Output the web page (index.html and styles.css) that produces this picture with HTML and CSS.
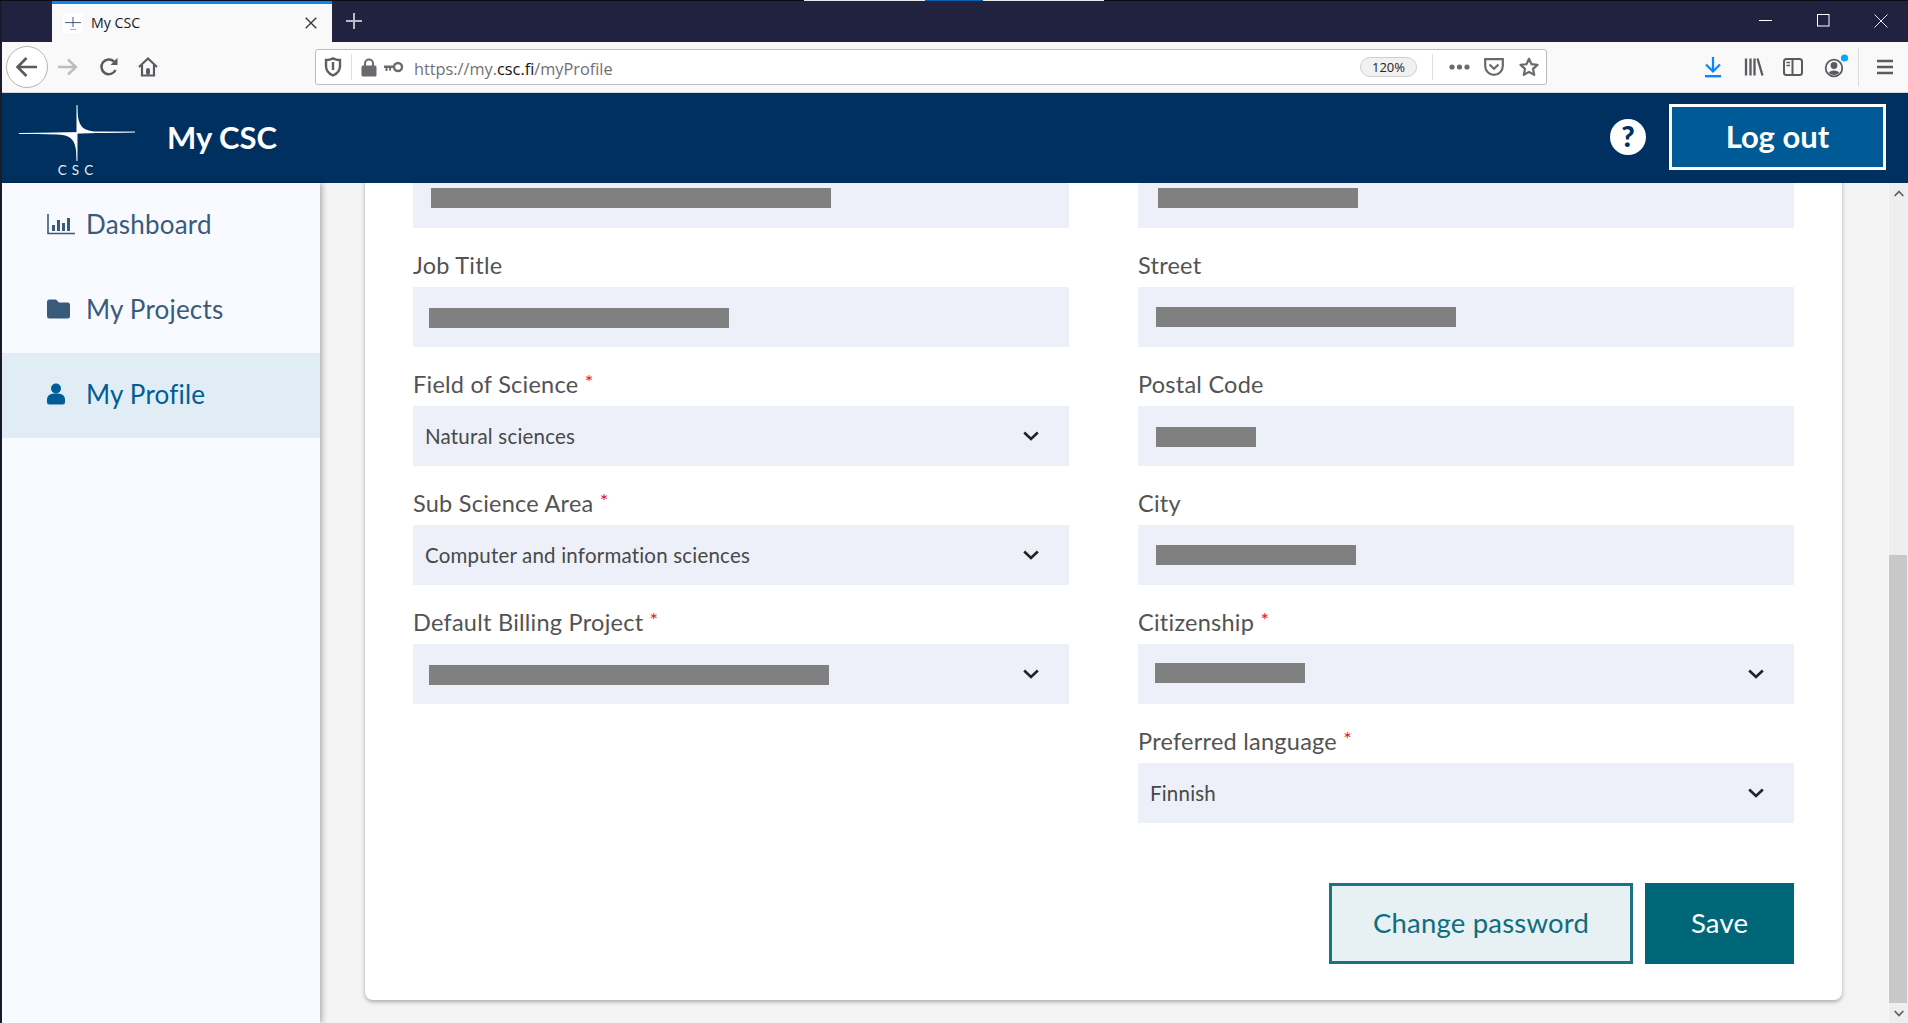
FILE: index.html
```html
<!DOCTYPE html>
<html lang="en">
<head>
<meta charset="utf-8">
<title>My CSC</title>
<link rel="stylesheet" href="styles.css">
</head>
<body>
<div class="window">
  <div class="topline"><span class="tl-white"></span><span class="tl-blue"></span><span class="tl-white"></span></div>
  <div class="tabstrip">
    <div class="tab">
      <span class="favicon"><svg width="20" height="20" viewBox="0 0 20 20"><path d="M2 9.6 H18 M10 4 V14" stroke="#16305c" stroke-width="0.8"/><rect x="7" y="16" width="6" height="1" fill="#a4aec0"/></svg></span>
      <span class="tab-title">My CSC</span>
      <svg class="tab-close" width="12" height="12" viewBox="0 0 12 12"><path d="M0.7 0.7 L11.3 11.3 M11.3 0.7 L0.7 11.3" stroke="#333" stroke-width="1.3"/></svg>
    </div>
    <svg class="tab-plus" width="18" height="18" viewBox="0 0 18 18"><path d="M9 1 V17 M1 9 H17" stroke="#b9bac4" stroke-width="2"/></svg>
    <div class="winbtns">
      <svg width="13" height="13" viewBox="0 0 13 13"><path d="M0 6.5 H13" stroke="#fff" stroke-width="1"/></svg>
      <svg class="win-max" width="13" height="13" viewBox="0 0 13 13"><rect x="0.5" y="0.5" width="11.5" height="11.5" fill="none" stroke="#fff"/></svg>
      <svg class="win-close" width="14" height="14" viewBox="0 0 14 14"><path d="M0.5 0.5 L13.5 13.5 M13.5 0.5 L0.5 13.5" stroke="#e6e6ea" stroke-width="1"/></svg>
    </div>
  </div>
  <div class="navbar">
    <span class="back"><svg width="24" height="22" viewBox="0 0 24 22"><path d="M22 11 H3 M11.5 2 L2.5 11 L11.5 20" fill="none" stroke="#5b5b5f" stroke-width="2.6"/></svg></span>
    <svg class="forward" width="20" height="18" viewBox="0 0 20 18"><path d="M0 9 H18 M10 1.5 L18 9 L10 16.5" fill="none" stroke="#bdbdbf" stroke-width="2.4"/></svg>
    <svg class="reload" width="20" height="20" viewBox="0 0 20 20"><path d="M16.5 13 A7.4 7.4 0 1 1 15 4.5" fill="none" stroke="#5b5b5f" stroke-width="2.5"/><path d="M18.5 0.8 V8 H11.5 Z" fill="#5b5b5f"/></svg>
    <svg class="home" width="20" height="20" viewBox="0 0 20 20"><path d="M1 10 L10 1.5 L19 10 M4 8 V18.5 H16 V8" fill="none" stroke="#5b5b5f" stroke-width="2.2"/><rect x="8" y="11" width="4" height="7" rx="2" fill="#5b5b5f"/></svg>
    <div class="urlbar">
      <svg class="u-shield" width="18" height="20" viewBox="0 0 18 20"><path d="M2 3 C5.5 3 7 2 9 1.5 C11 2 12.5 3 16 3 V9 C16 14 12.5 17 9 18.5 C5.5 17 2 14 2 9 Z" fill="none" stroke="#5f5f63" stroke-width="2.4"/><path d="M9 5 V13" stroke="#5f5f63" stroke-width="2.4"/></svg>
      <span class="u-sep u-sep-a"></span>
      <svg class="u-lock" width="16" height="19" viewBox="0 0 16 19"><path d="M4 8 V5.5 A4 4 0 0 1 12 5.5 V8" fill="none" stroke="#6a6a6e" stroke-width="2"/><rect x="0.5" y="7.5" width="15" height="11" rx="1.5" fill="#6a6a6e"/></svg>
      <svg class="u-key" width="20" height="12" viewBox="0 0 20 12"><circle cx="14" cy="6" r="4" fill="none" stroke="#6a6a6e" stroke-width="2.4"/><path d="M0 4.5 H10 V7 H0 Z M1.5 7 H3.5 V10 H1.5 Z M5 7 H7 V9.5 H5 Z" fill="#6a6a6e"/></svg>
      <span class="u-text">https://my.<b class="u-host">csc.fi</b>/myProfile</span>
      <span class="u-zoom">120%</span>
      <span class="u-sep u-sep-b"></span>
      <svg class="u-dots" width="21" height="6" viewBox="0 0 21 6"><circle cx="3" cy="3" r="2.6" fill="#6a6a6e"/><circle cx="10.5" cy="3" r="2.6" fill="#6a6a6e"/><circle cx="18" cy="3" r="2.6" fill="#6a6a6e"/></svg>
      <svg class="u-pocket" width="20" height="18" viewBox="0 0 20 18"><path d="M1.2 1.2 H18.8 V8 A8.8 8.8 0 0 1 1.2 8 Z" fill="none" stroke="#6a6a6e" stroke-width="2.2"/><path d="M5.5 6.5 L10 10.8 L14.5 6.5" fill="none" stroke="#6a6a6e" stroke-width="2.2"/></svg>
      <svg class="u-star" width="20" height="20" viewBox="0 0 20 20"><path d="M10 1.8 L12.5 7.2 L18.5 7.9 L14 11.9 L15.2 17.9 L10 14.9 L4.8 17.9 L6 11.9 L1.5 7.9 L7.5 7.2 Z" fill="none" stroke="#6a6a6e" stroke-width="2.2" stroke-linejoin="round"/></svg>
    </div>
    <svg class="t-down" width="20" height="22" viewBox="0 0 20 22"><path d="M10 1 V15 M3 8.5 L10 15.5 L17 8.5" fill="none" stroke="#0a84ff" stroke-width="2.2"/><rect x="2" y="19" width="16" height="2.4" fill="#0a84ff"/></svg>
    <svg class="t-lib" width="20" height="18" viewBox="0 0 20 18"><path d="M2 0.5 V17.5 M6.5 0.5 V17.5 M10.5 0.5 V17.5 M13.5 0.5 L18.5 17.5" fill="none" stroke="#5b5b5f" stroke-width="2.3"/></svg>
    <svg class="t-side" width="20" height="18" viewBox="0 0 20 18"><rect x="1" y="1" width="18" height="16" rx="2.5" fill="none" stroke="#5b5b5f" stroke-width="2"/><path d="M9.5 1 V17" stroke="#5b5b5f" stroke-width="2"/><path d="M3.5 4.5 H7 M3.5 7.5 H7" stroke="#5b5b5f" stroke-width="1.5"/></svg>
    <svg class="t-acct" width="26" height="24" viewBox="0 0 26 24"><circle cx="10" cy="14" r="8.3" fill="none" stroke="#5b5b5f" stroke-width="1.8"/><circle cx="10" cy="11.5" r="3.4" fill="#5b5b5f"/><path d="M4.8 19 C5.5 15.5 14.5 15.5 15.2 19 A8 8 0 0 1 4.8 19 Z" fill="#5b5b5f"/><circle cx="20.5" cy="4" r="3.6" fill="#0aa5ff"/></svg>
    <span class="t-sep"></span>
    <svg class="t-menu" width="16" height="16" viewBox="0 0 16 16"><path d="M0 2 H16 M0 8 H16 M0 14 H16" stroke="#5b5b5f" stroke-width="2.3"/></svg>
  </div>
  <header class="appbar">
    <svg class="logo" width="120" height="75" viewBox="0 0 120 75"><path d="M60 3 C60.8 22 63 29 80 29.6 L118 30 L60 31.5 Z" fill="#fff"/><path d="M60 59 C59.2 40 57 33 40 32.4 L2 31.5 L60 30.5 Z" fill="#fff"/><path d="M60 3 V59 M2 31.5 L118 30" stroke="#fff" stroke-width="1"/><text class="logo-text" x="61" y="73" text-anchor="middle">CSC</text></svg>
    <span class="app-title">My CSC</span>
    <svg class="help" width="36" height="36" viewBox="0 0 36 36"><circle cx="18" cy="18" r="18" fill="#fff"/><text class="help-q" x="18" y="28" text-anchor="middle">?</text></svg>
    <button class="logout">Log out</button>
  </header>
  <div class="content">
    <nav class="sidebar">
      <a class="side-item"><svg class="side-icon" width="28" height="22" viewBox="0 0 28 22"><path d="M1 1 V20.5 H28" fill="none" stroke="#3a5a7c" stroke-width="1.6"/><path d="M5 12 H8 V18 H5 Z M10 7 H13 V18 H10 Z M15 10 H18 V18 H15 Z M20 5 H23 V18 H20 Z" fill="#3a5a7c"/></svg>Dashboard</a>
      <a class="side-item"><svg class="side-icon" width="28" height="20" viewBox="0 0 28 20"><path d="M0 3 A2.5 2.5 0 0 1 2.5 0.5 H9 L12 3.5 H20.5 A2.5 2.5 0 0 1 23 6 V17 A2.5 2.5 0 0 1 20.5 19.5 H2.5 A2.5 2.5 0 0 1 0 17 Z" fill="#3a5a7c"/></svg>My Projects</a>
      <a class="side-item side-active"><svg class="side-icon" width="28" height="22" viewBox="0 0 28 22"><circle cx="9" cy="5.5" r="5" fill="#005d96"/><path d="M0 17 C0 12 3 10.5 9 10.5 C15 10.5 18 12 18 17 V19 A2.5 2.5 0 0 1 15.5 21.5 H2.5 A2.5 2.5 0 0 1 0 19 Z" fill="#005d96"/></svg>My Profile</a>
    </nav>
    <main class="main">
      <section class="card">
        <div class="form">
          <div class="field"><div class="input"><span class="bar w400 left18"></span></div></div>
          <div class="field"><div class="input"><span class="bar w200 left20"></span></div></div>

          <div class="field"><label class="label">Job Title</label><div class="input"><span class="bar w300 left16 low"></span></div></div>
          <div class="field"><label class="label">Street</label><div class="input"><span class="bar w300 left18"></span></div></div>

          <div class="field"><label class="label">Field of Science <span class="req">*</span></label><div class="input select"><span class="value">Natural sciences</span><svg class="chev" width="16" height="10" viewBox="0 0 16 10"><path d="M1.2 1.5 L8 8 L14.8 1.5" fill="none" stroke="#222" stroke-width="2.6"/></svg></div></div>
          <div class="field"><label class="label">Postal Code</label><div class="input"><span class="bar w100 left18 low"></span></div></div>

          <div class="field"><label class="label">Sub Science Area <span class="req">*</span></label><div class="input select"><span class="value">Computer and information sciences</span><svg class="chev" width="16" height="10" viewBox="0 0 16 10"><path d="M1.2 1.5 L8 8 L14.8 1.5" fill="none" stroke="#222" stroke-width="2.6"/></svg></div></div>
          <div class="field"><label class="label">City</label><div class="input"><span class="bar w200 left18"></span></div></div>

          <div class="field"><label class="label">Default Billing Project <span class="req">*</span></label><div class="input select"><span class="bar w400 left16 low"></span><svg class="chev" width="16" height="10" viewBox="0 0 16 10"><path d="M1.2 1.5 L8 8 L14.8 1.5" fill="none" stroke="#222" stroke-width="2.6"/></svg></div></div>
          <div class="field"><label class="label">Citizenship <span class="req">*</span></label><div class="input select"><span class="bar w150 left17 high"></span><svg class="chev" width="16" height="10" viewBox="0 0 16 10"><path d="M1.2 1.5 L8 8 L14.8 1.5" fill="none" stroke="#222" stroke-width="2.6"/></svg></div></div>

          <div class="field field-empty"></div>
          <div class="field"><label class="label">Preferred language <span class="req">*</span></label><div class="input select"><span class="value">Finnish</span><svg class="chev" width="16" height="10" viewBox="0 0 16 10"><path d="M1.2 1.5 L8 8 L14.8 1.5" fill="none" stroke="#222" stroke-width="2.6"/></svg></div></div>
        </div>
        <div class="actions">
          <button class="btn btn-outline">Change password</button>
          <button class="btn btn-solid">Save</button>
        </div>
      </section>
    </main>
    <div class="scrollbar">
      <div class="sb-btn"><svg width="10" height="7" viewBox="0 0 10 7"><path d="M0.7 6 L5 1.5 L9.3 6" fill="none" stroke="#606060" stroke-width="1.8"/></svg></div>
      <div class="sb-track"><div class="sb-thumb"></div></div>
      <div class="sb-btn"><svg width="10" height="7" viewBox="0 0 10 7"><path d="M0.7 1 L5 5.5 L9.3 1" fill="none" stroke="#606060" stroke-width="1.8"/></svg></div>
    </div>
  </div>
</div>
</body>
</html>
```
FILE: styles.css
```css
* { box-sizing: border-box; }
html, body { margin: 0; height: 100%; overflow: hidden; }
body { font-family: "Lato", "Liberation Sans", sans-serif; background: #1a1b2c; }
svg { display: block; flex: none; }

.window { height: 1023px; padding-left: 2px; display: flex; flex-direction: column; }

.topline { height: 1px; background: #0c0c14; display: flex; margin-left: -2px; padding-left: 804px; flex: none; }
.tl-white { width: 121px; background: #e8e8e8; }
.tl-blue { width: 58px; background: #0a5fb0; }

.tabstrip { height: 41px; background: #20223f; display: flex; align-items: center; flex: none; }
.tab { width: 280px; height: 41px; margin-left: 50px; background: #f9f9fa; border-top: 3px solid #0a84ff; display: flex; align-items: center; }
.favicon { width: 20px; height: 20px; margin-left: 11px; background: #fff; }
.tab-title { margin-left: 8px; padding-bottom: 2px; font: 14.2px "Open Sans", sans-serif; color: #1b1b1d; flex: 1; }
.tab-close { margin-right: 15px; }
.tab-plus { margin-left: 13px; margin-bottom: 2px; }
.winbtns { margin-left: auto; margin-right: 20px; margin-bottom: 2px; display: flex; align-items: center; }
.win-max { margin-left: 45px; }
.win-close { margin-left: 44px; }

.navbar { height: 51px; background: #f9f9fa; border-bottom: 1px solid #d6d6d8; display: flex; align-items: center; flex: none; }
.back { width: 42px; height: 42px; margin-left: 4px; border: 1px solid #b5b5b7; border-radius: 50%; background: #fff; display: flex; align-items: center; justify-content: center; }
.forward { margin-left: 10px; }
.reload { margin-left: 21px; }
.home { margin-left: 19px; }

.urlbar { width: 1232px; height: 36px; margin-left: 157px; background: #fff; border: 1px solid #bcbcbe; border-radius: 3px; display: flex; align-items: center; }
.u-shield { margin-left: 8px; }
.u-sep { width: 1px; height: 26px; background: #dfdfe1; flex: none; }
.u-sep-a { margin-left: 9px; }
.u-lock { margin-left: 9px; }
.u-key { margin-left: 7px; }
.u-text { margin-left: 10px; padding-top: 3px; flex: 1; font: 16.3px "Open Sans", sans-serif; color: #6f7178; white-space: nowrap; }
.u-host { font-weight: 400; color: #111; }
.u-zoom { width: 57px; height: 20px; border: 1px solid #cfcfd1; border-radius: 10px; background: #f1f1f2; font: 13px/18px "Open Sans", sans-serif; color: #222; text-align: center; }
.u-sep-b { margin-left: 15px; }
.u-dots { margin-left: 16px; }
.u-pocket { margin-left: 14px; }
.u-star { margin-left: 15px; margin-right: 7px; }

.t-down { margin-left: 156px; }
.t-lib { margin-left: 21px; }
.t-side { margin-left: 19px; }
.t-acct { margin-left: 21px; margin-top: -3px; }
.t-sep { width: 1px; height: 38px; margin-left: 8px; background: #dcdcde; }
.t-menu { margin-left: 18px; }

.appbar { height: 90px; background: #00305f; display: flex; align-items: center; flex: none; }
.logo { margin-left: 15px; margin-top: 3px; }
.logo-text { font: 13.5px "Lato", sans-serif; letter-spacing: 5px; fill: #e8edf3; }
.app-title { margin-left: 30px; padding-bottom: 3px; font-size: 31px; font-weight: 700; color: #fff; flex: 1; }
.help { margin-right: 23px; margin-bottom: 2px; }
.help-q { font: 900 29px "Lato", sans-serif; fill: #00305f; }
.logout { width: 217px; height: 66px; margin-right: 22px; margin-bottom: 2px; background: #005a96; border: 3px solid #fff; color: #fff; font: 700 31px "Lato", sans-serif; padding: 0 0 2px; }

.content { flex: 1; min-height: 0; display: flex; background: #f4f4f4; }
.sidebar { width: 318px; flex: none; background: #f8faff; box-shadow: 2px 0 6px rgba(0,0,0,.3); position: relative; }
.side-item { height: 85px; padding: 0 0 4px 45px; display: flex; align-items: center; font-size: 26px; letter-spacing: .2px; color: #3a5a7c; }
.side-icon { margin-right: 11px; width: 28px; }
.side-active { background: #e1edf5; color: #005d96; }

.main { flex: 1; min-width: 0; overflow: hidden; padding: 0 46px 0 45px; }
.card { margin-top: -15px; height: 832px; padding: 0 48px; background: #fff; border-radius: 0 0 8px 8px; box-shadow: 0 2px 4px rgba(0,0,0,.3); }
.form { display: grid; grid-template-columns: 656px 656px; column-gap: 69px; }
.field { display: flex; flex-direction: column; justify-content: flex-end; }
.label { height: 59px; padding-top: 23px; font-size: 23.5px; line-height: 29px; letter-spacing: .25px; color: #535353; white-space: nowrap; }
.req { color: #e8112d; font-size: 20px; line-height: 0; vertical-align: 4px; }
.input { height: 60px; background: #edf0f8; display: flex; align-items: center; flex: none; }
.select { padding-right: 30px; }
.value { margin-left: 12px; font-size: 20.5px; letter-spacing: .2px; color: #484848; }
.chev { margin-left: auto; }

.bar { height: 20px; background: #808080; display: block; }
.low { margin-top: 2px; }
.high { margin-top: -2px; }
.w100 { width: 100px; }
.w150 { width: 150px; }
.w200 { width: 200px; }
.w300 { width: 300px; }
.w400 { width: 400px; }
.left16 { margin-left: 16px; }
.left17 { margin-left: 17px; }
.left18 { margin-left: 18px; }
.left20 { margin-left: 20px; }

.actions { margin-top: 60px; display: flex; justify-content: flex-end; gap: 12px; }
.btn { height: 81px; font: 27.5px "Lato", sans-serif; padding: 0 0 2px; letter-spacing: .2px; }
.btn-outline { width: 304px; background: #e7f0f2; border: 3px solid #1a7382; color: #0f6e7e; }
.btn-solid { width: 149px; background: #006778; border: 0; color: #fff; }

.scrollbar { width: 20px; flex: none; background: #eeeeee; display: flex; flex-direction: column; border-left: 1px solid #f7f7f7; }
.sb-btn { height: 20px; flex: none; display: flex; align-items: center; justify-content: center; }
.sb-track { flex: 1; min-height: 0; padding-top: 352px; }
.sb-thumb { width: 18px; height: 448px; background: #c8c8c8; }
```
